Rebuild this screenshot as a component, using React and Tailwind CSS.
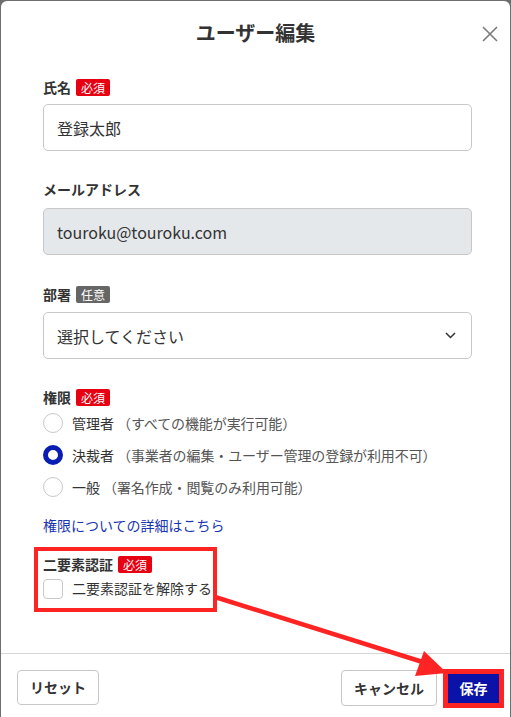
import React from 'react';

const font = { fontFamily: '"Noto Sans CJK JP", "Noto Sans", sans-serif' };

function Badge({ children, tone = 'red' }) {
    const color = tone === 'red' ? 'bg-[#e60012]' : 'bg-[#666666]';
    return (
        <span className={`${color} text-white text-[12px] leading-[17px] px-[5px] rounded-[2px] font-normal`}>
            {children}
        </span>
    );
}

function Label({ children, badge, tone }) {
    return (
        <div className="flex items-center gap-[5px] h-[18px]">
            <span className="text-[14px] font-bold text-[#333]">{children}</span>
            {badge && <Badge tone={tone}>{badge}</Badge>}
        </div>
    );
}

function Radio({ checked, label, note }) {
    return (
        <div className="flex items-center h-[32px]">
            {checked ? (
                <span className="w-[20px] h-[20px] rounded-full border-[5px] border-[#0a1db3] bg-white" />
            ) : (
                <span className="w-[20px] h-[20px] rounded-full border border-[#c8c8c8] bg-white" />
            )}
            <span className="ml-[9px] text-[14px] text-[#333]">{label}</span>
            <span className="ml-[3px] text-[14px] text-[#555] tracking-[-0.1px]">（{note}）</span>
        </div>
    );
}

export default function App() {
    return (
        <div className="w-[511px] h-[717px] bg-[#6e6e6e] pl-px pt-px overflow-hidden" style={font}>
            <div className="relative w-[509px] h-[716px] bg-white rounded-t-[6px] flex flex-col">
                {/* header */}
                <div className="relative h-[64px] flex items-center justify-center">
                    <h1 className="text-[20px] font-bold text-[#333]">ユーザー編集</h1>
                    <svg className="absolute right-[11px] top-[24px]" width="18" height="18" viewBox="0 0 18 18">
                        <path d="M2 2 L16 16 M16 2 L2 16" stroke="#7a7a7a" strokeWidth="1.6" fill="none" />
                    </svg>
                </div>

                {/* body */}
                <div className="flex-1 pl-[42px] pr-[38px] pt-[13px]">
                    <Label badge="必須">氏名</Label>
                    <div className="mt-[8px] h-[47px] border border-[#c8c8c8] rounded-[5px] flex items-center px-[13px] text-[16px] text-[#333]">
                        登録太郎
                    </div>

                    <div className="mt-[29px]">
                        <Label>メールアドレス</Label>
                    </div>
                    <div className="mt-[10px] h-[47px] border border-[#c8c8c8] bg-[#e5e8eb] rounded-[5px] flex items-center px-[13px] text-[16px] text-[#333]">
                        touroku@touroku.com
                    </div>

                    <div className="mt-[30px]">
                        <Label badge="任意" tone="gray">部署</Label>
                    </div>
                    <div className="mt-[9px] h-[47px] border border-[#c8c8c8] rounded-[5px] flex items-center justify-between pl-[13px] pr-[15px] text-[16px] text-[#333]">
                        <span>選択してください</span>
                        <svg width="11" height="7" viewBox="0 0 11 7">
                            <path d="M1 1 L5.5 5.5 L10 1" stroke="#333" strokeWidth="1.5" fill="none" />
                        </svg>
                    </div>

                    <div className="mt-[29px]">
                        <Label badge="必須">権限</Label>
                    </div>
                    <div className="mt-[1px] flex flex-col">
                        <Radio label="管理者" note="すべての機能が実行可能" />
                        <Radio checked label="決裁者" note="事業者の編集・ユーザー管理の登録が利用不可" />
                        <Radio label="一般" note="署名作成・閲覧のみ利用可能" />
                    </div>
                    <div className="mt-[13px] text-[14px] text-[#1a35b0] h-[18px] leading-[18px]">権限についての詳細はこちら</div>

                    <div className="mt-[13px] -ml-[9px] w-fit border-[4px] border-[#ff2424] pl-[5px] pr-[1px] pt-[4px] pb-[5px]">
                        <Label badge="必須">二要素認証</Label>
                        <div className="mt-[1px] flex items-center h-[29px]">
                            <span className="w-[20px] h-[20px] rounded-[4px] border border-[#c8c8c8]" />
                            <span className="ml-[9px] text-[14px] text-[#333]">二要素認証を解除する</span>
                        </div>
                    </div>
                </div>

                {/* footer */}
                <div className="border-t border-[#d6d6d6] h-[64px] flex items-start justify-between pl-[16px] pr-[6px] pt-[16px]">
                    <button className="h-[35px] px-[12px] border border-[#c8c8c8] rounded-[4px] text-[14px] font-bold text-[#333] bg-white">
                        リセット
                    </button>
                    <div className="flex items-start gap-[6px]">
                        <button className="h-[36px] px-[12px] border border-[#c8c8c8] rounded-[4px] text-[14px] font-bold text-[#333] bg-white">
                            キャンセル
                        </button>
                        <div className="border-[5px] border-[#ff2424] -mt-px">
                            <button className="h-[29px] w-[51px] bg-[#0a12a8] text-white text-[14px] font-bold">保存</button>
                        </div>
                    </div>
                </div>

                {/* annotation arrow */}
                <svg className="absolute left-0 top-0 pointer-events-none" width="509" height="716" viewBox="0 0 509 716">
                    <line x1="214" y1="596" x2="428" y2="663" stroke="#ff2424" strokeWidth="4.5" />
                    <polygon points="423,650 414,675 446,672" fill="#ff2424" />
                </svg>
            </div>
        </div>
    );
}
